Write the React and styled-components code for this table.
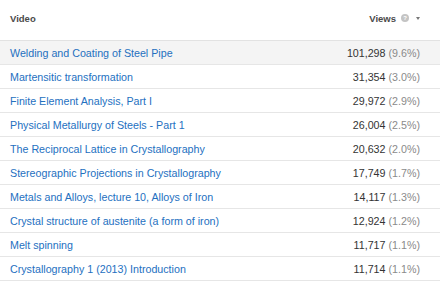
import React from "react";
import styled, { createGlobalStyle } from "styled-components";

const GlobalStyle = createGlobalStyle`
  body {
    margin: 0;
    background: #fff;
    font-family: "Liberation Sans", Arial, sans-serif;
  }
`;

const Table = styled.div`
  width: 440px;
  display: flex;
  flex-direction: column;
`;

const HeaderRow = styled.div`
  display: flex;
  justify-content: space-between;
  align-items: center;
  height: 41px;
  padding: 0 20px 4px 10px;
  box-sizing: border-box;
  border-bottom: 1px solid #e2e2e2;
  font-size: 9.5px;
  font-weight: bold;
  color: #4a4a4a;
`;

const HeadRight = styled.div`
  display: flex;
  align-items: center;
  gap: 5px;
`;

const Help = styled.span`
  width: 8px;
  height: 8px;
  border-radius: 50%;
  background: #c4c4c4;
  color: #fff;
  font-size: 6px;
  line-height: 8px;
  text-align: center;
`;

const Caret = styled.span`
  width: 0;
  height: 0;
  margin-left: 2px;
  border-left: 2.5px solid transparent;
  border-right: 2.5px solid transparent;
  border-top: 3px solid #777;
`;

const Row = styled.div`
  display: flex;
  justify-content: space-between;
  align-items: center;
  height: 24px;
  padding: 1px 20px 0 10px;
  box-sizing: border-box;
  border-bottom: 1px solid #e6e6e6;
  background: ${p => (p.$active ? "#f4f4f4" : "#fff")};
  font-size: 10.7px;
`;

const Title = styled.a`
  color: #2470bf;
  text-decoration: none;
`;

const Count = styled.span`
  color: #333;
`;

const Pct = styled.span`
  color: #8a8a8a;
`;

const rows = [
  ["Welding and Coating of Steel Pipe", "101,298", "9.6%"],
  ["Martensitic transformation", "31,354", "3.0%"],
  ["Finite Element Analysis, Part I", "29,972", "2.9%"],
  ["Physical Metallurgy of Steels - Part 1", "26,004", "2.5%"],
  ["The Reciprocal Lattice in Crystallography", "20,632", "2.0%"],
  ["Stereographic Projections in Crystallography", "17,749", "1.7%"],
  ["Metals and Alloys, lecture 10, Alloys of Iron", "14,117", "1.3%"],
  ["Crystal structure of austenite (a form of iron)", "12,924", "1.2%"],
  ["Melt spinning", "11,717", "1.1%"],
  ["Crystallography 1 (2013) Introduction", "11,714", "1.1%"],
];

export default function App() {
  return (
    <>
      <GlobalStyle />
      <Table>
        <HeaderRow>
          <span>Video</span>
          <HeadRight>
            <span>Views</span>
            <Help>?</Help>
            <Caret />
          </HeadRight>
        </HeaderRow>
        {rows.map(([t, n, p], i) => (
          <Row key={t} $active={i === 0}>
            <Title href="#">{t}</Title>
            <Count>
              {n} <Pct>({p})</Pct>
            </Count>
          </Row>
        ))}
      </Table>
    </>
  );
}
